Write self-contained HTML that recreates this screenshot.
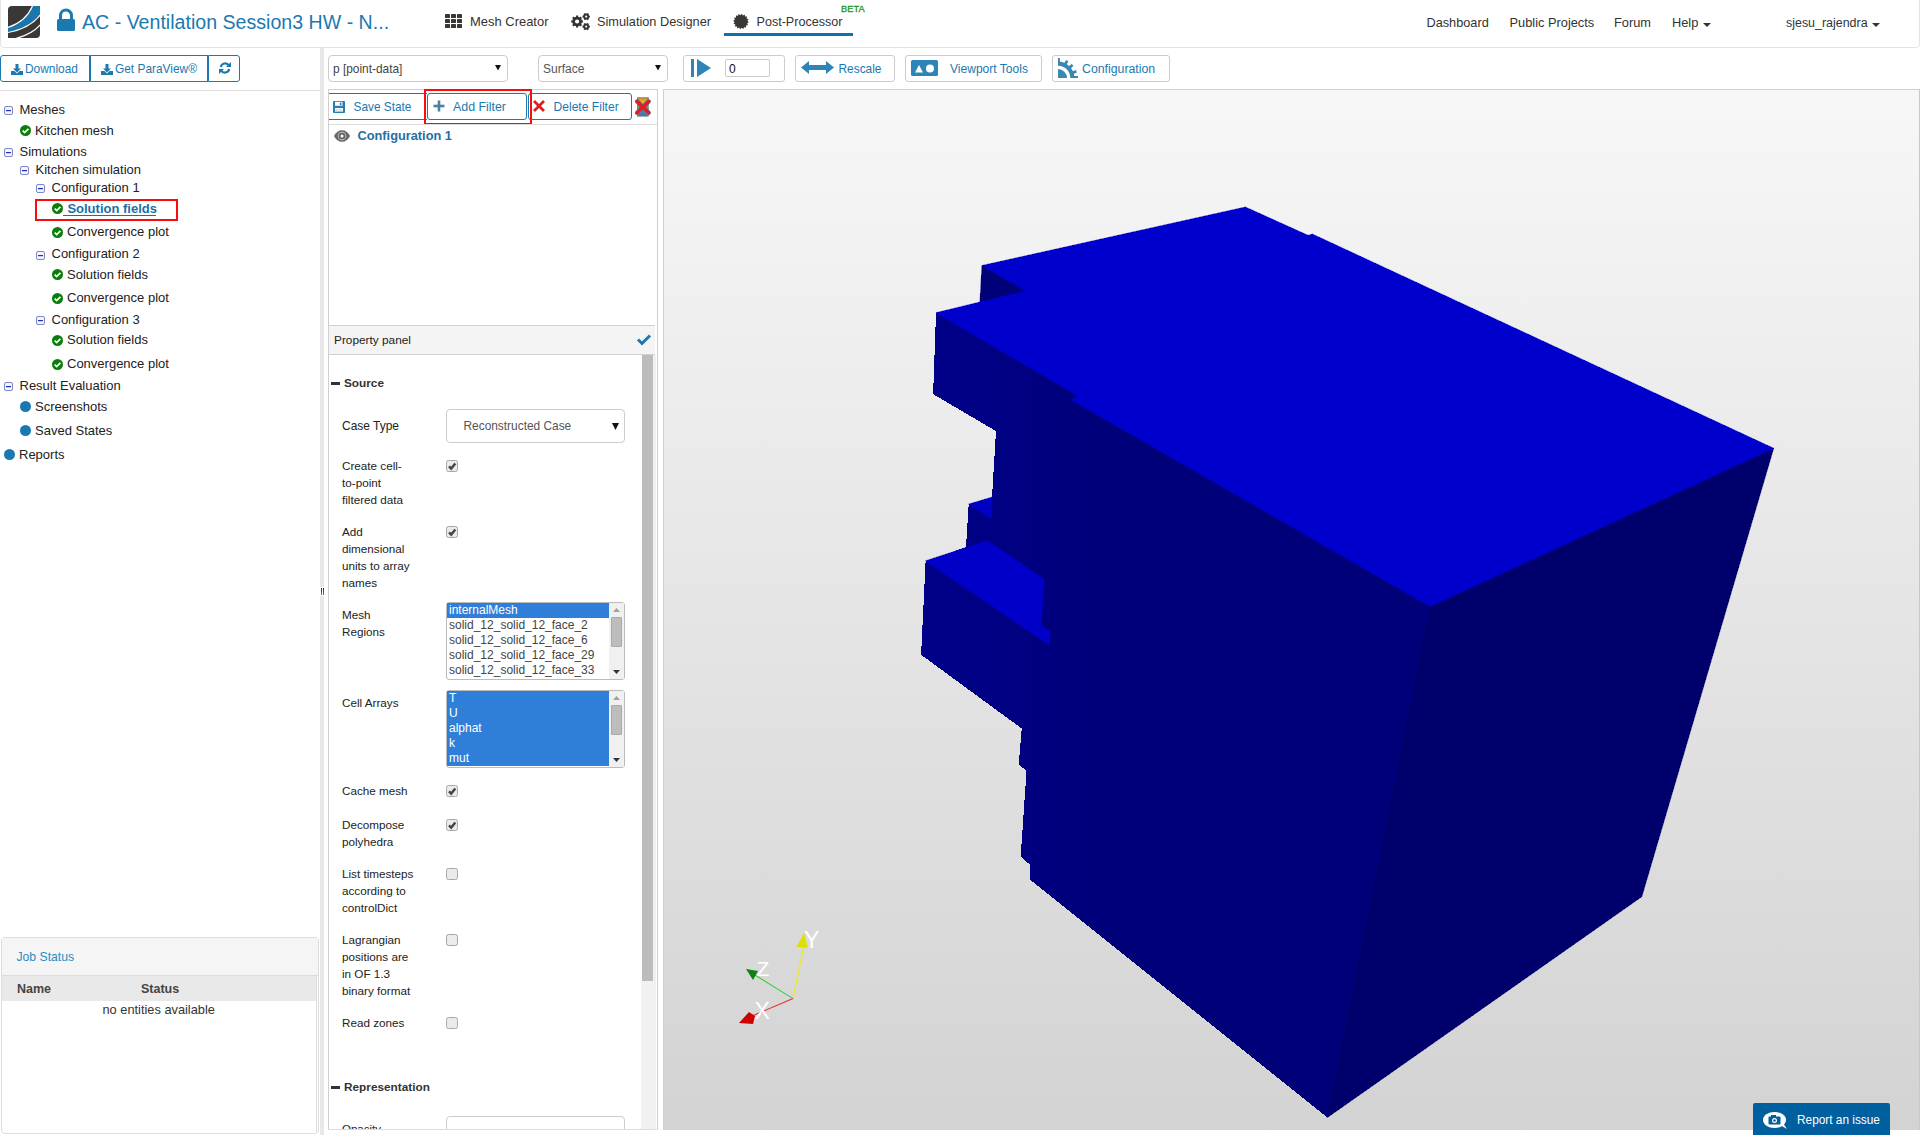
<!DOCTYPE html><html><head><meta charset="utf-8"><style>
*{margin:0;padding:0;box-sizing:border-box}
html,body{width:1920px;height:1135px;overflow:hidden;background:#fff;font-family:"Liberation Sans",sans-serif}
.a{position:absolute}
svg.a{overflow:visible}
.t{position:absolute;height:0;line-height:0;white-space:nowrap}
.t span{display:inline-block;line-height:0}
</style></head><body>
<div class="a" style="left:663px;top:90px;width:1257px;height:1040px;background:linear-gradient(#f7f7f7,#d3d3d3);border-left:1px solid #d0d0d0;border-right:1px solid #c8c8c8;"></div>
<svg class="a" style="left:0;top:0" width="1920" height="1135" viewBox="0 0 1920 1135" shape-rendering="crispEdges"><polygon points="982,265.6 1245.4,207.1 1308,235.4 1312.5,234.2 1773.6,448.3 1641.7,896.7 1327.3,1117.5 1030,879.7 1030.4,865.1 1020.7,856.4 1026.5,771.1 1018.8,764.3 1021.7,728.5 921.1,654.8 925.6,560.9 966,547.3 968.7,504.2 992,497.2 996,431.1 933.1,394.1 936,312.8 980,302.6" fill="#000079" stroke="#000079" stroke-width="0" stroke-linejoin="round"/><polygon points="1430,606.5 1773.6,448.3 1641.7,896.7 1327.3,1117.5" fill="#00006d" stroke="#00006d" stroke-width="0.7" stroke-linejoin="round"/><defs><linearGradient id="lf" x1="920" y1="0" x2="1430" y2="0" gradientUnits="userSpaceOnUse"><stop offset="0" stop-color="#00008a"/><stop offset="0.35" stop-color="#00007a"/><stop offset="1" stop-color="#000078"/></linearGradient></defs><polygon points="936,312.8 933.1,394.1 996,431.1 992,497.2 968.7,504.2 966,547.3 925.6,560.9 921.1,654.8 1021.7,728.5 1018.8,764.3 1026.5,771.1 1020.7,856.4 1030.4,865.1 1030,879.7 1327.3,1117.5 1430,606.5 1071.5,400 1077.5,395.5" fill="url(#lf)" stroke="url(#lf)" stroke-width="0" stroke-linejoin="round"/><polygon points="982,265.6 980,302.6 1025.8,291" fill="#000079" stroke="#000079" stroke-width="0.7" stroke-linejoin="round"/><polygon points="1245.4,207.1 1308,235.4 1312.5,234.2 1773.6,448.3 1430,606.5 1071.5,400 1077.5,395.5 936,312.8 1025.8,291 982,265.6" fill="#0000cd" stroke="#0000cd" stroke-width="0.7" stroke-linejoin="round"/><polygon points="968.7,504.2 992,497.2 991.6,519.2" fill="#0000c4" stroke="#0000c4" stroke-width="0.7" stroke-linejoin="round"/><polygon points="925.6,560.9 987.2,540.8 1044.1,579 1041,625.7 1049.8,631 1049.4,645.1" fill="#0000c8" stroke="#0000c8" stroke-width="0.7" stroke-linejoin="round"/></svg>
<svg class="a" style="left:0;top:0" width="1920" height="1135" viewBox="0 0 1920 1135">
<line x1="793" y1="998.6" x2="804" y2="945" stroke="#e8e830" stroke-width="1.3"/>
<line x1="793" y1="998.6" x2="755" y2="975" stroke="#30d030" stroke-width="1.1"/>
<line x1="793" y1="998.6" x2="752" y2="1016" stroke="#e03030" stroke-width="1.1"/>
<path d="M804 933 L796.5 947 L808 948Z" fill="#e0e000"/>
<path d="M746 969 L758 971 L753 980Z" fill="#108010"/>
<path d="M739 1023 L749 1012 L755 1016 L753 1024Z" fill="#d00000"/>
</svg>
<div class="t" style="left:804px;top:940px;font-size:23px;color:#fff;"><span>Y</span></div>
<div class="t" style="left:756.5px;top:969px;font-size:21px;color:#fff;"><span>Z</span></div>
<div class="t" style="left:754.5px;top:1011px;font-size:23px;color:#fff;"><span>X</span></div>
<div class="a" style="left:1753px;top:1103px;width:137px;height:32px;background:#005f9e;border-radius:2px 2px 0 0;"></div>
<svg class="a" style="left:1763px;top:1112px;" width="25" height="17" viewBox="0 0 25 17"><ellipse cx="11.5" cy="8" rx="11.5" ry="8" fill="#fff"/><path d="M17 13 L24 17 L20 11Z" fill="#fff"/><rect x="5.5" y="4.5" width="12" height="8" rx="1" fill="#005f9e"/><rect x="8" y="3" width="5" height="2" fill="#005f9e"/><circle cx="11.5" cy="8.5" r="2.5" fill="#fff"/><circle cx="11.5" cy="8.5" r="1.3" fill="#005f9e"/></svg>
<div class="t" style="left:1797px;top:1120px;font-size:11.85px;color:#fff;"><span>Report an issue</span></div>
<div class="a" style="left:0px;top:-2px;width:1920px;height:50px;border:1px solid #e3e3e3;border-radius:4px;background:#fff;"></div>
<svg class="a" style="left:8px;top:6px;" width="32" height="32" viewBox="0 0 32 32">
<defs><clipPath id="lg"><path d="M4 0 H32 V28 A4 4 0 0 1 28 32 H0 V4 A4 4 0 0 1 4 0Z"/></clipPath></defs>
<g clip-path="url(#lg)">
<rect x="0" y="0" width="32" height="32" fill="#3b3734"/>
<path d="M0 21 C12 17 20 10 25 0 L33 0 L33 7 C26 17 14 24 0 26 Z" fill="#1b76ad"/>
<path d="M0 21.5 C12 17.5 20 10.5 24.5 0" stroke="#fff" stroke-width="1.2" fill="none"/>
<path d="M0 26.5 C14 24 26 17.5 33 8" stroke="#fff" stroke-width="1.2" fill="none"/>
<path d="M6 33 C18 30 28 24 33 18" stroke="#fff" stroke-width="1.2" fill="none"/>
</g></svg>
<svg class="a" style="left:57px;top:9px;" width="18" height="22" viewBox="0 0 18 22"><path d="M3.5 10 V6.5 A5.5 5.5 0 0 1 14.5 6.5 V10" stroke="#1b79b0" stroke-width="3" fill="none"/>
<rect x="0" y="10" width="18" height="12" rx="1.5" fill="#1b79b0"/></svg>
<div class="t" style="left:82px;top:22px;font-size:19.6px;color:#1b79b0;"><span>AC - Ventilation Session3 HW - N...</span></div>
<svg class="a" style="left:445px;top:14px;" width="17" height="14" viewBox="0 0 17 14"><rect x="0" y="0" width="5" height="4" rx="0.6" fill="#3b3734"/><rect x="6" y="0" width="5" height="4" rx="0.6" fill="#3b3734"/><rect x="12" y="0" width="5" height="4" rx="0.6" fill="#3b3734"/><rect x="0" y="5" width="5" height="4" rx="0.6" fill="#3b3734"/><rect x="6" y="5" width="5" height="4" rx="0.6" fill="#3b3734"/><rect x="12" y="5" width="5" height="4" rx="0.6" fill="#3b3734"/><rect x="0" y="10" width="5" height="4" rx="0.6" fill="#3b3734"/><rect x="6" y="10" width="5" height="4" rx="0.6" fill="#3b3734"/><rect x="12" y="10" width="5" height="4" rx="0.6" fill="#3b3734"/></svg>
<div class="t" style="left:470px;top:22px;font-size:12.96px;color:#333;"><span>Mesh Creator</span></div>
<svg class="a" style="left:0px;top:0px;" width="1" height="1" viewBox="0 0 1 1"><circle cx="577.1" cy="21.5" r="4.8" fill="#333"/><polygon points="581.47,20.42 583.01,20.45 583.01,22.55 581.47,22.58 580.96,23.82 582.02,24.93 580.53,26.42 579.42,25.36 578.18,25.87 578.15,27.41 576.05,27.41 576.02,25.87 574.78,25.36 573.67,26.42 572.18,24.93 573.24,23.82 572.73,22.58 571.19,22.55 571.19,20.45 572.73,20.42 573.24,19.18 572.18,18.07 573.67,16.58 574.78,17.64 576.02,17.13 576.05,15.59 578.15,15.59 578.18,17.13 579.42,17.64 580.53,16.58 582.02,18.07 580.96,19.18" fill="#333"/><circle cx="577.1" cy="21.5" r="2.1" fill="#fff"/><circle cx="586.2" cy="16.6" r="3.0" fill="#333"/><polygon points="588.76,15.74 589.90,15.71 589.90,17.49 588.76,17.46 588.23,18.39 588.82,19.36 587.28,20.24 586.73,19.25 585.67,19.25 585.12,20.24 583.58,19.36 584.17,18.39 583.64,17.46 582.50,17.49 582.50,15.71 583.64,15.74 584.17,14.81 583.58,13.84 585.12,12.96 585.67,13.95 586.73,13.95 587.28,12.96 588.82,13.84 588.23,14.81" fill="#333"/><circle cx="586.2" cy="16.6" r="1.1" fill="#fff"/><circle cx="586.2" cy="26.6" r="3.0" fill="#333"/><polygon points="588.76,25.74 589.90,25.71 589.90,27.49 588.76,27.46 588.23,28.39 588.82,29.36 587.28,30.24 586.73,29.25 585.67,29.25 585.12,30.24 583.58,29.36 584.17,28.39 583.64,27.46 582.50,27.49 582.50,25.71 583.64,25.74 584.17,24.81 583.58,23.84 585.12,22.96 585.67,23.95 586.73,23.95 587.28,22.96 588.82,23.84 588.23,24.81" fill="#333"/><circle cx="586.2" cy="26.6" r="1.1" fill="#fff"/></svg>
<div class="t" style="left:597px;top:22px;font-size:12.74px;color:#333;"><span>Simulation Designer</span></div>
<svg class="a" style="left:0px;top:0px;" width="1" height="1" viewBox="0 0 1 1"><polygon points="748.86,22.27 747.12,23.36 747.97,25.22 745.95,25.56 746.01,27.61 744.02,27.14 743.29,29.06 741.63,27.87 740.23,29.36 739.14,27.62 737.28,28.47 736.94,26.45 734.89,26.51 735.36,24.52 733.44,23.79 734.63,22.13 733.14,20.73 734.88,19.64 734.03,17.78 736.05,17.44 735.99,15.39 737.98,15.86 738.71,13.94 740.37,15.13 741.77,13.64 742.86,15.38 744.72,14.53 745.06,16.55 747.11,16.49 746.64,18.48 748.56,19.21 747.37,20.87" fill="#3b3734"/></svg>
<div class="t" style="left:756.5px;top:22px;font-size:12.58px;color:#333;"><span>Post-Processor</span></div>
<div class="t" style="left:841px;top:9px;font-size:9.3px;color:#1f941f;-webkit-text-stroke:0.3px #1f941f;"><span>BETA</span></div>
<div class="a" style="left:724px;top:33px;width:129px;height:3px;background:#0d73ab;"></div>
<div class="t" style="left:1426.5px;top:23px;font-size:12.73px;color:#333;"><span>Dashboard</span></div>
<div class="t" style="left:1509.5px;top:23px;font-size:12.82px;color:#333;"><span>Public Projects</span></div>
<div class="t" style="left:1614px;top:23px;font-size:12.8px;color:#333;"><span>Forum</span></div>
<div class="t" style="left:1672px;top:23px;font-size:12.8px;color:#333;"><span>Help</span></div>
<svg class="a" style="left:1703px;top:23px;" width="8" height="4" viewBox="0 0 8 4"><path d="M0 0 L8 0 L4 4Z" fill="#333"/></svg>
<div class="t" style="left:1786px;top:23px;font-size:12.45px;color:#333;"><span>sjesu_rajendra</span></div>
<svg class="a" style="left:1872px;top:23px;" width="8" height="4" viewBox="0 0 8 4"><path d="M0 0 L8 0 L4 4Z" fill="#333"/></svg>
<div class="a" style="left:0px;top:55px;width:90px;height:27px;border:1px solid #1b79b0;border-radius:3px 0 0 3px;"></div>
<svg class="a" style="left:11px;top:64px;" width="12" height="11" viewBox="0 0 12 11"><g fill="#1b79b0"><path d="M4.5 0h3v4.5h2.5L6 8.5 2 4.5h2.5z"/><path d="M0 7h3.5l2.5 2.5L8.5 7H12v4H0z"/></g></svg>
<div class="t" style="left:25px;top:69px;font-size:11.92px;color:#1b79b0;"><span>Download</span></div>
<div class="a" style="left:90px;top:55px;width:118px;height:27px;border:1px solid #1b79b0;"></div>
<svg class="a" style="left:101px;top:64px;" width="12" height="11" viewBox="0 0 12 11"><g fill="#1b79b0"><path d="M4.5 0h3v4.5h2.5L6 8.5 2 4.5h2.5z"/><path d="M0 7h3.5l2.5 2.5L8.5 7H12v4H0z"/></g></svg>
<div class="t" style="left:115px;top:69px;font-size:11.9px;color:#1b79b0;"><span>Get ParaView®</span></div>
<div class="a" style="left:208px;top:55px;width:32px;height:27px;border:1px solid #1b79b0;border-radius:0 3px 3px 0;"></div>
<svg class="a" style="left:219px;top:62px;" width="12" height="12" viewBox="0 0 12 12"><g fill="none" stroke="#1b79b0" stroke-width="2.2">
<path d="M1.8 5 A4.5 4.5 0 0 1 10 3.5"/><path d="M10.2 7 A4.5 4.5 0 0 1 2 8.5"/></g>
<g fill="#1b79b0"><path d="M12 0 V5 H7z"/><path d="M0 12 V7 H5z"/></g></svg>
<div class="a" style="left:0px;top:90px;width:320px;height:1px;background:#ddd;"></div>
<div class="a" style="left:320px;top:48px;width:4px;height:1087px;background:#e8e8e8;"></div>
<div class="a" style="left:320px;top:587px;width:4px;height:9px;background:#fff;"></div>
<div class="a" style="left:321px;top:588px;width:1px;height:7px;background:linear-gradient(#222,#777);"></div>
<div class="a" style="left:323px;top:588px;width:1px;height:7px;background:linear-gradient(#222,#777);"></div>
<div class="t" style="left:19.5px;top:110px;font-size:13px;color:#222;"><span>Meshes</span></div>
<svg class="a" style="left:4px;top:106px;" width="9" height="9" viewBox="0 0 9 9"><rect x="0.5" y="0.5" width="8" height="8" rx="1.5" fill="#f4f4fa" stroke="#7f87c4"/><rect x="2" y="4" width="5" height="1.2" fill="#1d2fb8"/></svg>
<div class="t" style="left:35px;top:130.6px;font-size:13px;color:#222;"><span>Kitchen mesh</span></div>
<svg class="a" style="left:20px;top:125px;" width="11" height="11" viewBox="0 0 11 11"><circle cx="5.5" cy="5.5" r="5.5" fill="#0b7d0b"/><path d="M2.7 5.6 L4.7 7.6 L8.4 3.9" stroke="#fff" stroke-width="1.8" fill="none"/></svg>
<div class="t" style="left:19.5px;top:151.8px;font-size:13px;color:#222;"><span>Simulations</span></div>
<svg class="a" style="left:4px;top:148px;" width="9" height="9" viewBox="0 0 9 9"><rect x="0.5" y="0.5" width="8" height="8" rx="1.5" fill="#f4f4fa" stroke="#7f87c4"/><rect x="2" y="4" width="5" height="1.2" fill="#1d2fb8"/></svg>
<div class="t" style="left:35.5px;top:169.6px;font-size:13px;color:#222;"><span>Kitchen simulation</span></div>
<svg class="a" style="left:20px;top:166.4px;" width="9" height="9" viewBox="0 0 9 9"><rect x="0.5" y="0.5" width="8" height="8" rx="1.5" fill="#f4f4fa" stroke="#7f87c4"/><rect x="2" y="4" width="5" height="1.2" fill="#1d2fb8"/></svg>
<div class="t" style="left:51.5px;top:187.5px;font-size:13px;color:#222;"><span>Configuration 1</span></div>
<svg class="a" style="left:36px;top:184.2px;" width="9" height="9" viewBox="0 0 9 9"><rect x="0.5" y="0.5" width="8" height="8" rx="1.5" fill="#f4f4fa" stroke="#7f87c4"/><rect x="2" y="4" width="5" height="1.2" fill="#1d2fb8"/></svg>
<div class="t" style="left:67px;top:231.7px;font-size:13px;color:#222;"><span>Convergence plot</span></div>
<svg class="a" style="left:52px;top:226.5px;" width="11" height="11" viewBox="0 0 11 11"><circle cx="5.5" cy="5.5" r="5.5" fill="#0b7d0b"/><path d="M2.7 5.6 L4.7 7.6 L8.4 3.9" stroke="#fff" stroke-width="1.8" fill="none"/></svg>
<div class="t" style="left:51.5px;top:253.8px;font-size:13px;color:#222;"><span>Configuration 2</span></div>
<svg class="a" style="left:36px;top:250.6px;" width="9" height="9" viewBox="0 0 9 9"><rect x="0.5" y="0.5" width="8" height="8" rx="1.5" fill="#f4f4fa" stroke="#7f87c4"/><rect x="2" y="4" width="5" height="1.2" fill="#1d2fb8"/></svg>
<div class="t" style="left:67px;top:274.6px;font-size:13px;color:#222;"><span>Solution fields</span></div>
<svg class="a" style="left:52px;top:268.8px;" width="11" height="11" viewBox="0 0 11 11"><circle cx="5.5" cy="5.5" r="5.5" fill="#0b7d0b"/><path d="M2.7 5.6 L4.7 7.6 L8.4 3.9" stroke="#fff" stroke-width="1.8" fill="none"/></svg>
<div class="t" style="left:67px;top:298.1px;font-size:13px;color:#222;"><span>Convergence plot</span></div>
<svg class="a" style="left:52px;top:292.9px;" width="11" height="11" viewBox="0 0 11 11"><circle cx="5.5" cy="5.5" r="5.5" fill="#0b7d0b"/><path d="M2.7 5.6 L4.7 7.6 L8.4 3.9" stroke="#fff" stroke-width="1.8" fill="none"/></svg>
<div class="t" style="left:51.5px;top:319.9px;font-size:13px;color:#222;"><span>Configuration 3</span></div>
<svg class="a" style="left:36px;top:316.4px;" width="9" height="9" viewBox="0 0 9 9"><rect x="0.5" y="0.5" width="8" height="8" rx="1.5" fill="#f4f4fa" stroke="#7f87c4"/><rect x="2" y="4" width="5" height="1.2" fill="#1d2fb8"/></svg>
<div class="t" style="left:67px;top:340.4px;font-size:13px;color:#222;"><span>Solution fields</span></div>
<svg class="a" style="left:52px;top:335px;" width="11" height="11" viewBox="0 0 11 11"><circle cx="5.5" cy="5.5" r="5.5" fill="#0b7d0b"/><path d="M2.7 5.6 L4.7 7.6 L8.4 3.9" stroke="#fff" stroke-width="1.8" fill="none"/></svg>
<div class="t" style="left:67px;top:364.2px;font-size:13px;color:#222;"><span>Convergence plot</span></div>
<svg class="a" style="left:52px;top:359px;" width="11" height="11" viewBox="0 0 11 11"><circle cx="5.5" cy="5.5" r="5.5" fill="#0b7d0b"/><path d="M2.7 5.6 L4.7 7.6 L8.4 3.9" stroke="#fff" stroke-width="1.8" fill="none"/></svg>
<div class="t" style="left:19.5px;top:385.8px;font-size:13px;color:#222;"><span>Result Evaluation</span></div>
<svg class="a" style="left:4px;top:382px;" width="9" height="9" viewBox="0 0 9 9"><rect x="0.5" y="0.5" width="8" height="8" rx="1.5" fill="#f4f4fa" stroke="#7f87c4"/><rect x="2" y="4" width="5" height="1.2" fill="#1d2fb8"/></svg>
<div class="t" style="left:35px;top:406.5px;font-size:13px;color:#222;"><span>Screenshots</span></div>
<svg class="a" style="left:20px;top:400.7px;" width="11" height="11" viewBox="0 0 11 11"><circle cx="5.5" cy="5.5" r="5.5" fill="#1b78b0"/></svg>
<div class="t" style="left:35px;top:430.8px;font-size:13px;color:#222;"><span>Saved States</span></div>
<svg class="a" style="left:20px;top:424.6px;" width="11" height="11" viewBox="0 0 11 11"><circle cx="5.5" cy="5.5" r="5.5" fill="#1b78b0"/></svg>
<div class="t" style="left:19px;top:454.5px;font-size:13px;color:#222;"><span>Reports</span></div>
<svg class="a" style="left:4px;top:448.7px;" width="11" height="11" viewBox="0 0 11 11"><circle cx="5.5" cy="5.5" r="5.5" fill="#1b78b0"/></svg>
<svg class="a" style="left:52px;top:202.7px;" width="11" height="11" viewBox="0 0 11 11"><circle cx="5.5" cy="5.5" r="5.5" fill="#0b7d0b"/><path d="M2.7 5.6 L4.7 7.6 L8.4 3.9" stroke="#fff" stroke-width="1.8" fill="none"/></svg>
<div class="t" style="left:67.4px;top:209px;font-size:13px;color:#1b6fa8;font-weight:bold;"><span>Solution fields</span></div>
<div class="a" style="left:63px;top:214.5px;width:93px;height:1px;background:#1b6fa8;"></div>
<div class="a" style="left:35px;top:198.5px;width:143px;height:22px;border:2px solid #f80c0c;"></div>
<div class="a" style="left:1px;top:936.5px;width:318px;height:197px;border:1px solid #ddd;border-radius:4px;background:#fff;"></div>
<div class="a" style="left:2px;top:937.5px;width:316px;height:38px;background:#f5f5f5;border-bottom:1px solid #ddd;border-radius:3px 3px 0 0;"></div>
<div class="t" style="left:16.5px;top:957px;font-size:12.2px;color:#2a8fc0;"><span>Job Status</span></div>
<div class="a" style="left:2px;top:976px;width:314px;height:25px;background:#e9e9e9;"></div>
<div class="a" style="left:316px;top:976px;width:1px;height:156px;background:#ddd;"></div>
<div class="t" style="left:17px;top:989px;font-size:12.5px;color:#444;font-weight:bold;"><span>Name</span></div>
<div class="t" style="left:141px;top:989px;font-size:12.5px;color:#444;font-weight:bold;"><span>Status</span></div>
<div class="t" style="left:102.5px;top:1010px;font-size:12.8px;color:#333;"><span>no entities available</span></div>
<div class="a" style="left:328px;top:55px;width:180px;height:27px;border:1px solid #ccc;border-radius:4px;background:#fff;"></div>
<div class="t" style="left:333px;top:69px;font-size:11.9px;color:#444;"><span>p [point-data]</span></div>
<svg class="a" style="left:495px;top:65px;" width="6" height="5.5" viewBox="0 0 6 5.5"><path d="M0 0 H6 L3 5.5Z" fill="#111"/></svg>
<div class="a" style="left:538px;top:55px;width:130px;height:27px;border:1px solid #ccc;border-radius:4px;background:#fff;"></div>
<div class="t" style="left:543px;top:69px;font-size:12px;color:#555;"><span>Surface</span></div>
<svg class="a" style="left:655px;top:65px;" width="6" height="5.5" viewBox="0 0 6 5.5"><path d="M0 0 H6 L3 5.5Z" fill="#111"/></svg>
<div class="a" style="left:683px;top:55px;width:102px;height:27px;border:1px solid #ccc;border-radius:3px;"></div>
<svg class="a" style="left:691px;top:59px;" width="20" height="18" viewBox="0 0 20 18"><rect x="0" y="0" width="3" height="18" fill="#2d84b8"/><path d="M6 0 L20 9 L6 18Z" fill="#2d84b8"/></svg>
<div class="a" style="left:725px;top:59px;width:45px;height:18px;border:1px solid #ccc;border-radius:2px;"></div>
<div class="t" style="left:729px;top:69px;font-size:12px;color:#111;"><span>0</span></div>
<div class="a" style="left:795px;top:55px;width:100px;height:27px;border:1px solid #ccc;border-radius:3px;"></div>
<svg class="a" style="left:801px;top:61px;" width="33" height="13" viewBox="0 0 33 13"><path d="M0 6.5 L8 0 V4 H25 V0 L33 6.5 L25 13 V9 H8 V13Z" fill="#2d84b8"/></svg>
<div class="t" style="left:838.5px;top:69px;font-size:11.9px;color:#1b79b0;"><span>Rescale</span></div>
<div class="a" style="left:905px;top:55px;width:137px;height:27px;border:1px solid #ccc;border-radius:3px;"></div>
<svg class="a" style="left:911px;top:60px;" width="27" height="16" viewBox="0 0 27 16"><rect width="27" height="16" rx="1.5" fill="#2d84b8"/><path d="M4 12.5 L8 5 L12 12.5Z" fill="#fff"/><circle cx="19" cy="8.5" r="4" fill="#fff"/></svg>
<div class="t" style="left:950px;top:69px;font-size:12.06px;color:#1b79b0;"><span>Viewport Tools</span></div>
<div class="a" style="left:1052px;top:55px;width:118px;height:27px;border:1px solid #ccc;border-radius:3px;"></div>
<svg class="a" style="left:1058px;top:58px;" width="20" height="20" viewBox="0 0 20 20"><g fill="#3a88b2"><path d="M0 20 V11 A9 9 0 0 1 9 20 Z"/>
<path d="M0 3.6 A16.4 16.4 0 0 1 16.4 20 H12.3 A12.3 12.3 0 0 0 0 7.7 Z"/><rect x="-1.4" y="-19.6" width="2.8" height="5" rx="0.5" transform="translate(0 20) rotate(28)"/><rect x="-1.4" y="-19.6" width="2.8" height="5" rx="0.5" transform="translate(0 20) rotate(48)"/><rect x="-1.4" y="-19.6" width="2.8" height="5" rx="0.5" transform="translate(0 20) rotate(70)"/><rect x="15" y="18" width="5" height="2"/><rect x="0" y="0" width="1.9" height="5"/></g></svg>
<div class="t" style="left:1082px;top:69px;font-size:12.3px;color:#1b79b0;"><span>Configuration</span></div>
<div class="a" style="left:663px;top:89px;width:1257px;height:1px;background:#cfcfcf;"></div>
<div class="a" style="left:328px;top:89px;width:330px;height:1041px;border:1px solid #cfcfcf;background:#fff;"></div>
<div class="a" style="left:329px;top:93px;width:98px;height:27px;border-top:1px solid #1b79b0;border-bottom:1px solid #1b79b0;"></div>
<svg class="a" style="left:333px;top:101px;" width="12" height="12" viewBox="0 0 12 12"><rect x="0" y="0" width="12" height="12" rx="0.8" fill="#2a7db3"/><rect x="2" y="0.8" width="7.5" height="4" fill="#fff"/><rect x="6.8" y="1.6" width="1.6" height="2.6" fill="#2a7db3"/><rect x="2" y="7" width="8" height="3.6" fill="#fff"/><rect x="2.6" y="8" width="6.8" height="0.7" fill="#c9d9e6"/><rect x="2.6" y="9.3" width="6.8" height="0.7" fill="#c9d9e6"/></svg>
<div class="t" style="left:353.5px;top:107px;font-size:11.85px;color:#1b79b0;"><span>Save State</span></div>
<div class="a" style="left:427px;top:93px;width:100px;height:27px;border:1px solid #1b79b0;border-radius:3px;"></div>
<svg class="a" style="left:433px;top:100px;" width="12" height="12" viewBox="0 0 12 12"><rect x="4.7" y="0.5" width="2.6" height="11" fill="#4a80a0"/><rect x="0.5" y="4.7" width="11" height="2.6" fill="#4a80a0"/></svg>
<div class="t" style="left:453px;top:107px;font-size:12.38px;color:#1b79b0;"><span>Add Filter</span></div>
<div class="a" style="left:528px;top:93px;width:104px;height:27px;border:1px solid #1b79b0;border-radius:3px;"></div>
<svg class="a" style="left:533px;top:100px;" width="12" height="12" viewBox="0 0 12 12"><path d="M1 1 L11 11 M11 1 L1 11" stroke="#d8201f" stroke-width="2.8"/></svg>
<div class="t" style="left:553.5px;top:107px;font-size:12.1px;color:#1b79b0;"><span>Delete Filter</span></div>
<svg class="a" style="left:0px;top:0px;" width="1" height="1" viewBox="0 0 1 1"><defs><linearGradient id="og" x1="0" y1="0" x2="0" y2="1"><stop offset="0" stop-color="#e88a20"/><stop offset="1" stop-color="#ffc010"/></linearGradient>
<linearGradient id="bg2" x1="0" y1="0" x2="0" y2="1"><stop offset="0" stop-color="#20a0e0"/><stop offset="1" stop-color="#6060a0"/></linearGradient></defs>
<rect x="637" y="97.2" width="11.8" height="19.5" fill="#7a8a88"/>
<path d="M638 98.2 H647.8 L642.9 104Z" fill="url(#og)"/>
<path d="M638 115.7 H647.8 L642.9 109.5Z" fill="url(#bg2)"/>
<path d="M637 101.5 L648.8 112.8 M648.8 101.5 L637 112.8" stroke="#666" stroke-width="4.2" stroke-linecap="round"/>
<path d="M637 101.5 L648.8 112.8 M648.8 101.5 L637 112.8" stroke="#ee1620" stroke-width="2.8" stroke-linecap="round"/></svg>
<div class="a" style="left:424px;top:89px;width:108px;height:36px;border:2px solid #f80c0c;"></div>
<div class="a" style="left:329px;top:124px;width:328px;height:1px;background:#ddd;"></div>
<svg class="a" style="left:334px;top:129.5px;" width="16" height="12" viewBox="0 0 16 12"><path d="M0 6 Q3 0.2 8 0.2 Q13 0.2 16 6 Q13 11.8 8 11.8 Q3 11.8 0 6Z" fill="#666"/><circle cx="8" cy="6" r="4.3" fill="#ddd"/><circle cx="8" cy="6" r="3.6" fill="#666"/><circle cx="8" cy="6" r="1.5" fill="#fff"/></svg>
<div class="t" style="left:357.5px;top:136px;font-size:12.79px;color:#1f6fa5;font-weight:bold;"><span>Configuration 1</span></div>
<div class="a" style="left:329px;top:325px;width:326px;height:30px;background:#f4f4f4;border-top:1px solid #d0d0d0;border-bottom:1px solid #d0d0d0;"></div>
<div class="t" style="left:334px;top:340px;font-size:11.84px;color:#222;"><span>Property panel</span></div>
<svg class="a" style="left:637px;top:334px;" width="14" height="11" viewBox="0 0 14 11"><path d="M1 5.5 L5 9.5 L13 1.5" stroke="#1b78b0" stroke-width="3" fill="none"/></svg>
<div class="a" style="left:642px;top:355px;width:11px;height:626px;background:#bcbcbc;"></div>
<div class="a" style="left:653px;top:355px;width:3px;height:774px;background:#f0f0f0;"></div>
<div class="a" style="left:641px;top:981px;width:12px;height:148px;background:#f1f1f1;"></div>
<div class="a" style="left:331px;top:382px;width:9px;height:3px;background:#333;"></div>
<div class="t" style="left:344px;top:383px;font-size:11.8px;color:#333;font-weight:bold;"><span>Source</span></div>
<div class="t" style="left:342px;top:425.5px;font-size:11.97px;color:#222;"><span>Case Type</span></div>
<div class="a" style="left:446px;top:409px;width:179px;height:34px;border:1px solid #ccc;border-radius:4px;background:#fff;"></div>
<div class="t" style="left:463.5px;top:426px;font-size:11.9px;color:#555;"><span>Reconstructed Case</span></div>
<svg class="a" style="left:612px;top:423px;" width="7" height="7" viewBox="0 0 7 7"><path d="M0 0 H7 L3.5 7Z" fill="#111"/></svg>
<div class="t" style="left:342px;top:466px;font-size:11.7px;color:#222;"><span>Create cell-</span></div>
<div class="t" style="left:342px;top:483px;font-size:11.7px;color:#222;"><span>to-point</span></div>
<div class="t" style="left:342px;top:500px;font-size:11.7px;color:#222;"><span>filtered data</span></div>
<svg class="a" style="left:446px;top:460px;" width="12" height="12" viewBox="0 0 12 12"><rect x="0.5" y="0.5" width="11" height="11" rx="2" fill="#ebebeb" stroke="#a8a8a8"/><path d="M3 6.3 L5.2 8.6 L9.3 3.4" stroke="#454545" stroke-width="2.4" fill="none"/></svg>
<div class="t" style="left:342px;top:532px;font-size:11.7px;color:#222;"><span>Add</span></div>
<div class="t" style="left:342px;top:549px;font-size:11.7px;color:#222;"><span>dimensional</span></div>
<div class="t" style="left:342px;top:566px;font-size:11.7px;color:#222;"><span>units to array</span></div>
<div class="t" style="left:342px;top:583px;font-size:11.7px;color:#222;"><span>names</span></div>
<svg class="a" style="left:446px;top:526px;" width="12" height="12" viewBox="0 0 12 12"><rect x="0.5" y="0.5" width="11" height="11" rx="2" fill="#ebebeb" stroke="#a8a8a8"/><path d="M3 6.3 L5.2 8.6 L9.3 3.4" stroke="#454545" stroke-width="2.4" fill="none"/></svg>
<div class="t" style="left:342px;top:615px;font-size:11.7px;color:#222;"><span>Mesh</span></div>
<div class="t" style="left:342px;top:632px;font-size:11.7px;color:#222;"><span>Regions</span></div>
<div class="t" style="left:342px;top:703px;font-size:11.7px;color:#222;"><span>Cell Arrays</span></div>
<div class="t" style="left:342px;top:791px;font-size:11.7px;color:#222;"><span>Cache mesh</span></div>
<svg class="a" style="left:446px;top:785px;" width="12" height="12" viewBox="0 0 12 12"><rect x="0.5" y="0.5" width="11" height="11" rx="2" fill="#ebebeb" stroke="#a8a8a8"/><path d="M3 6.3 L5.2 8.6 L9.3 3.4" stroke="#454545" stroke-width="2.4" fill="none"/></svg>
<div class="t" style="left:342px;top:825px;font-size:11.7px;color:#222;"><span>Decompose</span></div>
<div class="t" style="left:342px;top:842px;font-size:11.7px;color:#222;"><span>polyhedra</span></div>
<svg class="a" style="left:446px;top:819px;" width="12" height="12" viewBox="0 0 12 12"><rect x="0.5" y="0.5" width="11" height="11" rx="2" fill="#ebebeb" stroke="#a8a8a8"/><path d="M3 6.3 L5.2 8.6 L9.3 3.4" stroke="#454545" stroke-width="2.4" fill="none"/></svg>
<div class="t" style="left:342px;top:874px;font-size:11.7px;color:#222;"><span>List timesteps</span></div>
<div class="t" style="left:342px;top:891px;font-size:11.7px;color:#222;"><span>according to</span></div>
<div class="t" style="left:342px;top:908px;font-size:11.7px;color:#222;"><span>controlDict</span></div>
<svg class="a" style="left:446px;top:868px;" width="12" height="12" viewBox="0 0 12 12"><rect x="0.5" y="0.5" width="11" height="11" rx="2" fill="#ebebeb" stroke="#a8a8a8"/></svg>
<div class="t" style="left:342px;top:940px;font-size:11.7px;color:#222;"><span>Lagrangian</span></div>
<div class="t" style="left:342px;top:957px;font-size:11.7px;color:#222;"><span>positions are</span></div>
<div class="t" style="left:342px;top:974px;font-size:11.7px;color:#222;"><span>in OF 1.3</span></div>
<div class="t" style="left:342px;top:991px;font-size:11.7px;color:#222;"><span>binary format</span></div>
<svg class="a" style="left:446px;top:934px;" width="12" height="12" viewBox="0 0 12 12"><rect x="0.5" y="0.5" width="11" height="11" rx="2" fill="#ebebeb" stroke="#a8a8a8"/></svg>
<div class="t" style="left:342px;top:1023px;font-size:11.7px;color:#222;"><span>Read zones</span></div>
<svg class="a" style="left:446px;top:1017px;" width="12" height="12" viewBox="0 0 12 12"><rect x="0.5" y="0.5" width="11" height="11" rx="2" fill="#ebebeb" stroke="#a8a8a8"/></svg>
<div class="a" style="left:446px;top:602px;width:179px;height:78px;border:1px solid #bbb;border-radius:3px;background:#fff;overflow:hidden;"></div>
<div class="a" style="left:447px;top:603px;width:162px;height:15px;background:#2f7fd8;"></div>
<div class="t" style="left:449px;top:610px;font-size:12px;color:#fff;"><span>internalMesh</span></div>
<div class="t" style="left:449px;top:625px;font-size:12px;color:#444;"><span>solid_12_solid_12_face_2</span></div>
<div class="t" style="left:449px;top:640px;font-size:12px;color:#444;"><span>solid_12_solid_12_face_6</span></div>
<div class="t" style="left:449px;top:655px;font-size:12px;color:#444;"><span>solid_12_solid_12_face_29</span></div>
<div class="t" style="left:449px;top:670px;font-size:12px;color:#444;"><span>solid_12_solid_12_face_33</span></div>
<div class="a" style="left:609px;top:603px;width:15px;height:76px;background:#f0f0f0;"></div>
<svg class="a" style="left:613px;top:608px;" width="7" height="4" viewBox="0 0 7 4"><path d="M0 4 L3.5 0 L7 4Z" fill="#a0a0a0"/></svg>
<svg class="a" style="left:613px;top:670px;" width="7" height="4" viewBox="0 0 7 4"><path d="M0 0 L7 0 L3.5 4Z" fill="#333"/></svg>
<div class="a" style="left:611px;top:617px;width:11px;height:30px;background:#bdbdbd;border:1px solid #aaa;border-radius:1px;"></div>
<div class="a" style="left:446px;top:690px;width:179px;height:78px;border:1px solid #bbb;border-radius:3px;background:#fff;overflow:hidden;"></div>
<div class="a" style="left:447px;top:691px;width:162px;height:15px;background:#2f7fd8;"></div>
<div class="t" style="left:449px;top:698px;font-size:12px;color:#fff;"><span>T</span></div>
<div class="a" style="left:447px;top:706px;width:162px;height:15px;background:#2f7fd8;"></div>
<div class="t" style="left:449px;top:713px;font-size:12px;color:#fff;"><span>U</span></div>
<div class="a" style="left:447px;top:721px;width:162px;height:15px;background:#2f7fd8;"></div>
<div class="t" style="left:449px;top:728px;font-size:12px;color:#fff;"><span>alphat</span></div>
<div class="a" style="left:447px;top:736px;width:162px;height:15px;background:#2f7fd8;"></div>
<div class="t" style="left:449px;top:743px;font-size:12px;color:#fff;"><span>k</span></div>
<div class="a" style="left:447px;top:751px;width:162px;height:15px;background:#2f7fd8;"></div>
<div class="t" style="left:449px;top:758px;font-size:12px;color:#fff;"><span>mut</span></div>
<div class="a" style="left:609px;top:691px;width:15px;height:76px;background:#f0f0f0;"></div>
<svg class="a" style="left:613px;top:696px;" width="7" height="4" viewBox="0 0 7 4"><path d="M0 4 L3.5 0 L7 4Z" fill="#a0a0a0"/></svg>
<svg class="a" style="left:613px;top:758px;" width="7" height="4" viewBox="0 0 7 4"><path d="M0 0 L7 0 L3.5 4Z" fill="#333"/></svg>
<div class="a" style="left:611px;top:705px;width:11px;height:30px;background:#bdbdbd;border:1px solid #aaa;border-radius:1px;"></div>
<div class="a" style="left:331px;top:1086px;width:9px;height:3px;background:#333;"></div>
<div class="t" style="left:344px;top:1087px;font-size:11.8px;color:#333;font-weight:bold;"><span>Representation</span></div>
<div class="t" style="left:342px;top:1129px;font-size:11.5px;color:#222;"><span>Opacity</span></div>
<div class="a" style="left:446px;top:1116px;width:179px;height:30px;border:1px solid #ccc;border-radius:4px;background:#fff;"></div>
<div class="a" style="left:328px;top:1129px;width:330px;height:6px;background:#fff;border-top:1px solid #ddd;"></div>
</body></html>
